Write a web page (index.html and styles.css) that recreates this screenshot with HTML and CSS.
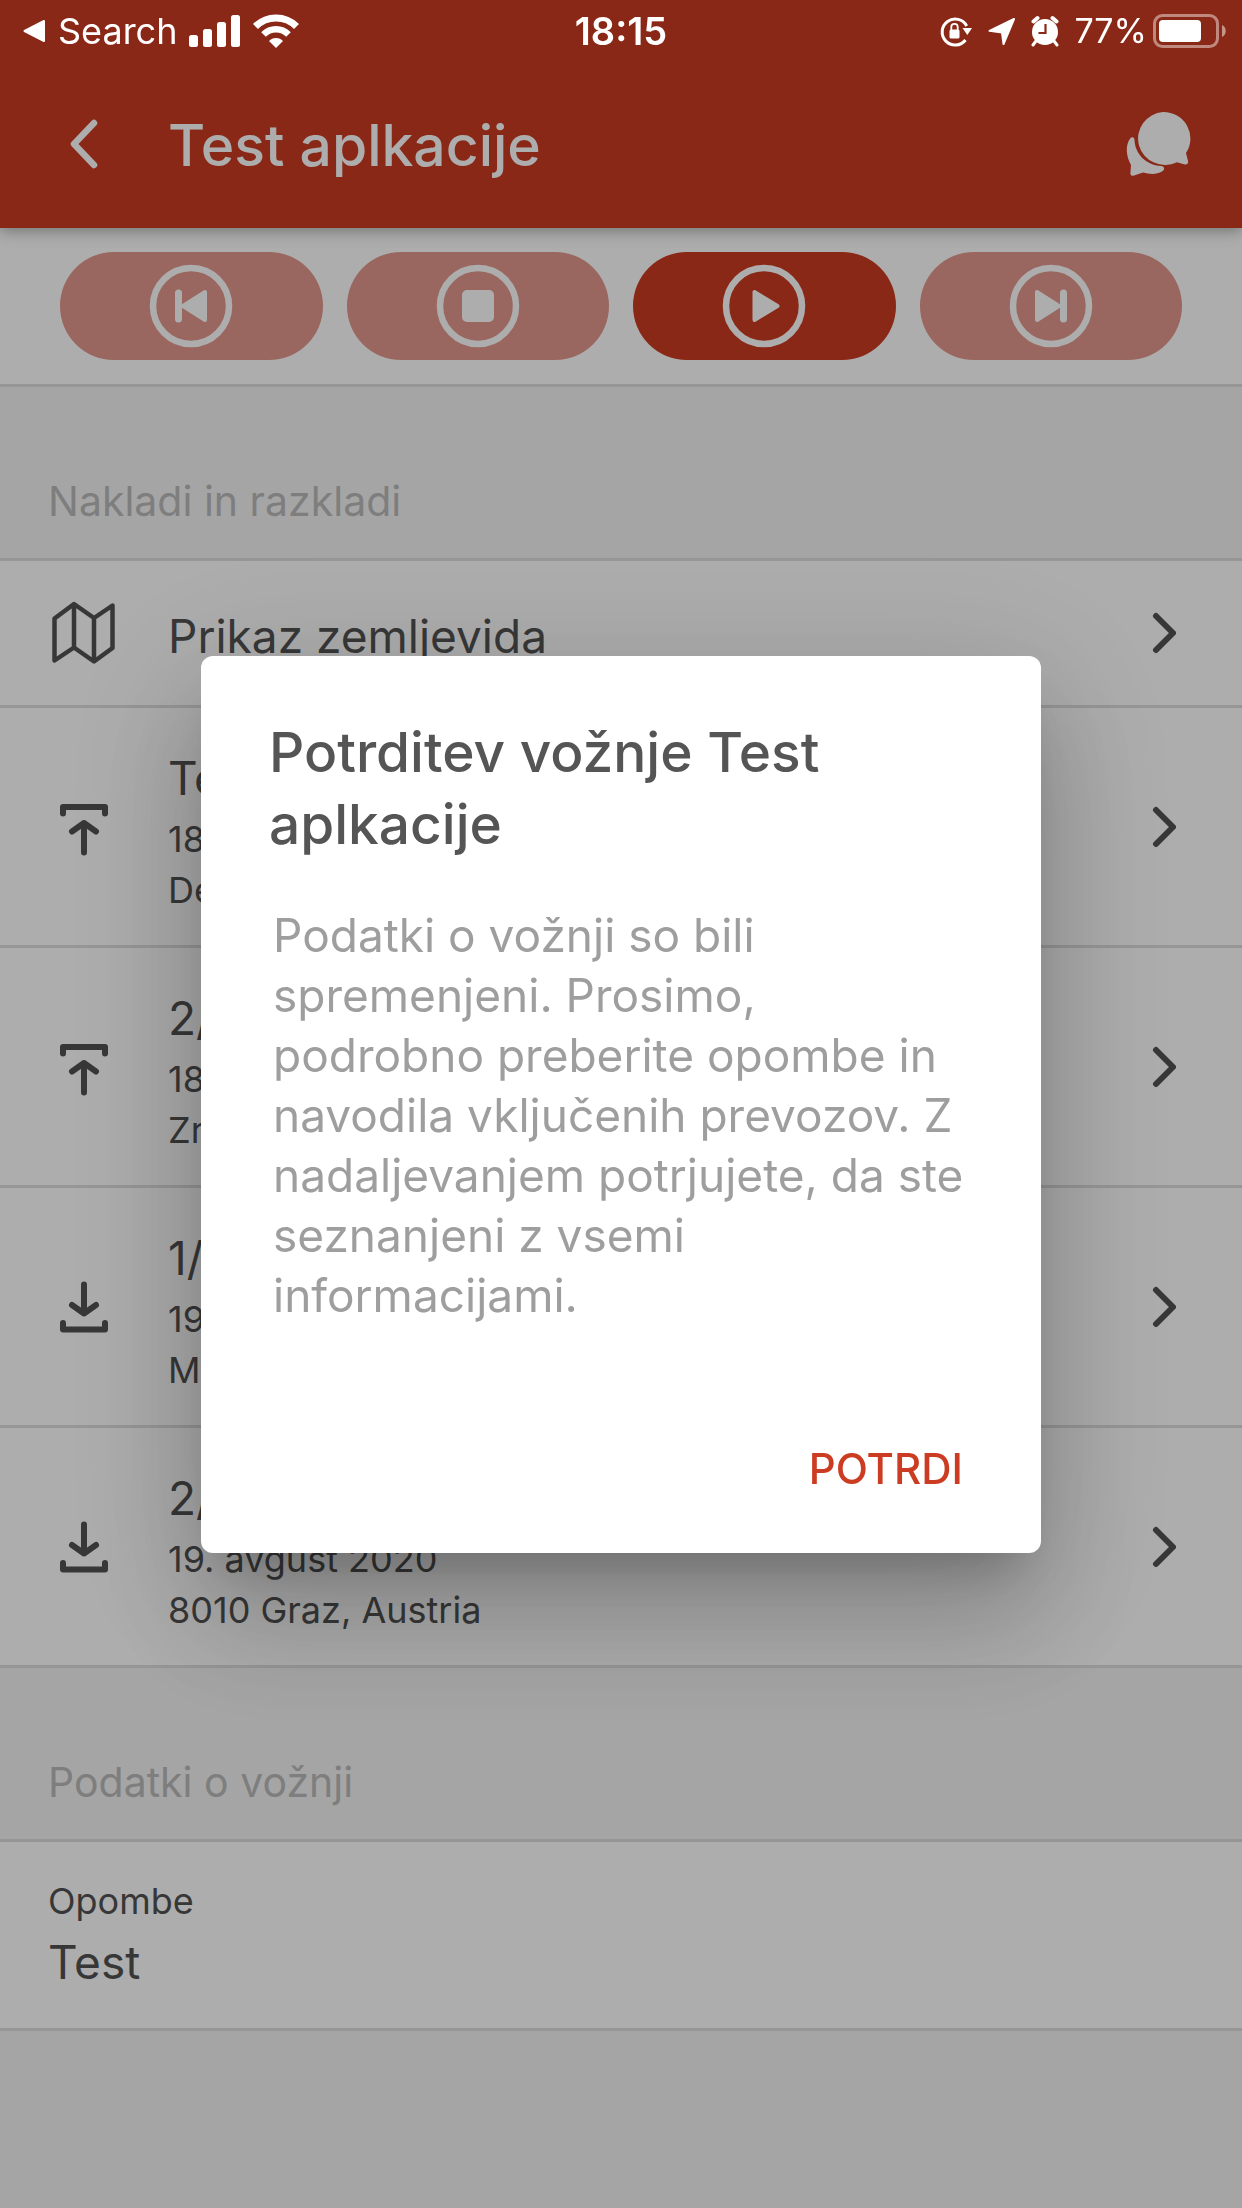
FILE: index.html
```html
<!DOCTYPE html>
<html lang="sl">
<head>
<meta charset="utf-8">
<meta name="viewport" content="width=device-width, initial-scale=1">
<title>Test aplkacije</title>
<link rel="stylesheet" href="styles.css">
</head>
<body>
<svg class="sprite" aria-hidden="true">
  <symbol id="chevron" viewBox="0 0 24 42"><path d="M4 4l17 17L4 38" fill="none" stroke="currentColor" stroke-width="6" stroke-linecap="round" stroke-linejoin="round"/></symbol>
  <symbol id="map" viewBox="0 0 72 72"><path d="M6.500 21.500L26 7l20 14L64.500 8.500V51L46 64.500l-20-14L6.500 63.500zM26 7v43.500M46 21v43.500" fill="none" stroke="currentColor" stroke-width="4.500" stroke-linejoin="round"/></symbol>
  <symbol id="load" viewBox="0 0 72 72"><path d="M15 22.500V16h42v6.500M36 61.500V32M24 40.500L36 32l12 8.500" fill="none" stroke="currentColor" stroke-width="6" stroke-linecap="round" stroke-linejoin="round"/></symbol>
  <symbol id="unload" viewBox="0 0 72 72"><path d="M15 52v6.500h42V52M36 13.500v29M24 34l12 8.500L48 34" fill="none" stroke="currentColor" stroke-width="6" stroke-linecap="round" stroke-linejoin="round"/></symbol>
</svg>

<div class="status">
  <div class="status-left">
    <svg width="24" height="24" viewBox="0 0 24 24"><path d="M2.500 12L22 2v20z" fill="currentColor" stroke="currentColor" stroke-width="2" stroke-linejoin="round"/></svg>
    <span class="status-back">Search</span>
    <svg width="52" height="34" viewBox="0 0 52 34" fill="currentColor"><rect y="21" width="9" height="12" rx="2.500"/><rect x="14" y="15" width="9" height="18" rx="2.500"/><rect x="28" y="8" width="9" height="25" rx="2.500"/><rect x="42" y="1" width="9" height="32" rx="2.500"/></svg>
    <svg width="46" height="34" viewBox="0 0 46 34" fill="none" stroke="currentColor" stroke-width="7"><path d="M2.500 12.500a29 29 0 0 1 41 0"/><path d="M10.500 20.500a17.700 17.700 0 0 1 25 0" stroke-width="6.500"/><path d="M23 24c3 0 5 1 7 3l-7 7-7-7c2-2 4-3 7-3z" fill="currentColor" stroke="none"/></svg>
  </div>
  <span class="status-time">18:15</span>
  <div class="status-right">
    <svg width="34" height="34" viewBox="0 0 34 34"><path d="M26.500 26a13 13 0 1 1 1.200-14" fill="none" stroke="currentColor" stroke-width="3"/><path d="M23.500 14h9.500l-4.700 7z" fill="currentColor"/><rect x="10.500" y="15.500" width="10" height="9" rx="1.500" fill="currentColor"/><path d="M12.300 16v-3a3.200 3.200 0 0 1 6.400 0v3" fill="none" stroke="currentColor" stroke-width="1.800"/></svg>
    <svg width="28" height="34" viewBox="0 0 28 34"><path d="M26 5L1.500 16.800l12.500 1.700L15.500 30z" fill="currentColor" stroke="currentColor" stroke-width="2" stroke-linejoin="round"/></svg>
    <svg width="28" height="34" viewBox="0 0 28 34"><circle cx="14" cy="18" r="13" fill="currentColor"/><path d="M2.500 7.500L6.500 4M25.500 7.500l-4-3.500" stroke="currentColor" stroke-width="4" stroke-linecap="round"/><path d="M5 27l-3 4M23 27l3 4" stroke="currentColor" stroke-width="3" stroke-linecap="round"/><path d="M14.500 10v9H7.500" fill="none" stroke="#8b2917" stroke-width="2.200"/></svg>
    <span class="status-level">77%</span>
    <svg width="74" height="36" viewBox="0 0 74 36"><rect x="1.500" y="2.500" width="63" height="31" rx="8" fill="none" stroke="currentColor" stroke-opacity=".45" stroke-width="3"/><rect x="6" y="7" width="42" height="22" rx="4" fill="currentColor"/><path d="M69 12c5 2 5 10 0 12z" fill="currentColor" fill-opacity=".5"/></svg>
  </div>
</div>

<header class="appbar">
  <button class="icon-button" type="button" aria-label="Nazaj">
    <svg width="30" height="50" viewBox="0 0 30 50"><path d="M25 4L5 25l20 21" fill="none" stroke="currentColor" stroke-width="6.500" stroke-linecap="round" stroke-linejoin="round"/></svg>
  </button>
  <h1 class="appbar-title">Test aplkacije</h1>
  <button class="icon-button" type="button" aria-label="Sporočila">
    <svg width="66" height="66" viewBox="0 0 66 66" fill="currentColor"><path d="M38 1a27 26.500 0 0 1 23 41l2 8c.7 3-1.500 4-4 3.200l-7-2A27 26.500 0 1 1 38 1z"/><path d="M5.500 27c2-1.500 4-.5 4 2C10 43 21 54 36 55c4 .5 4 4 1 5.500-5 3-12 3-19 1l-9 3c-3 1-4-1-3.500-3.500L6 54C1 45 0 34 5.500 27z"/></svg>
  </button>
</header>

<nav class="controls" aria-label="Upravljanje vožnje">
  <button class="control" type="button" disabled aria-label="Prejšnji">
    <svg class="control-icon" viewBox="0 0 84 84"><circle cx="42" cy="42" r="38" fill="none" stroke="currentColor" stroke-width="6.500"/><path d="M29.500 29v26" stroke="currentColor" stroke-width="7" stroke-linecap="round"/><path d="M34 42l22-14v28z" fill="currentColor" stroke="currentColor" stroke-width="4" stroke-linejoin="round"/></svg>
  </button>
  <button class="control" type="button" disabled aria-label="Ustavi">
    <svg class="control-icon" viewBox="0 0 84 84"><circle cx="42" cy="42" r="38" fill="none" stroke="currentColor" stroke-width="6.500"/><rect x="26" y="26" width="32" height="32" rx="5" fill="currentColor"/></svg>
  </button>
  <button class="control" type="button" aria-label="Začni">
    <svg class="control-icon" viewBox="0 0 84 84"><circle cx="42" cy="42" r="38" fill="none" stroke="currentColor" stroke-width="6.500"/><path d="M32.500 28v28l23-14z" fill="currentColor" stroke="currentColor" stroke-width="4" stroke-linejoin="round"/></svg>
  </button>
  <button class="control" type="button" disabled aria-label="Naslednji">
    <svg class="control-icon" viewBox="0 0 84 84"><circle cx="42" cy="42" r="38" fill="none" stroke="currentColor" stroke-width="6.500"/><path d="M54.500 29v26" stroke="currentColor" stroke-width="7" stroke-linecap="round"/><path d="M50 42L28 28v28z" fill="currentColor" stroke="currentColor" stroke-width="4" stroke-linejoin="round"/></svg>
  </button>
</nav>

<main>
  <section>
    <h2 class="section-title">Nakladi in razkladi</h2>
    <a class="row" href="#zemljevid">
      <svg class="row-icon"><use href="#map"/></svg>
      <span class="row-text row-text-single"><span class="row-title">Prikaz zemljevida</span></span>
      <svg class="row-chevron"><use href="#chevron"/></svg>
    </a>
    <a class="row" href="#naklad-1">
      <svg class="row-icon"><use href="#load"/></svg>
      <span class="row-text"><span class="row-title">Te</span><span class="row-line">18</span><span class="row-line">De</span></span>
      <svg class="row-chevron"><use href="#chevron"/></svg>
    </a>
    <a class="row" href="#naklad-2">
      <svg class="row-icon"><use href="#load"/></svg>
      <span class="row-text"><span class="row-title">2/</span><span class="row-line">18</span><span class="row-line">Zr</span></span>
      <svg class="row-chevron"><use href="#chevron"/></svg>
    </a>
    <a class="row" href="#razklad-1">
      <svg class="row-icon"><use href="#unload"/></svg>
      <span class="row-text"><span class="row-title">1/</span><span class="row-line">19</span><span class="row-line">M</span></span>
      <svg class="row-chevron"><use href="#chevron"/></svg>
    </a>
    <a class="row" href="#razklad-2">
      <svg class="row-icon"><use href="#unload"/></svg>
      <span class="row-text"><span class="row-title">2/</span><span class="row-line">19. avgust 2020</span><span class="row-line">8010 Graz, Austria</span></span>
      <svg class="row-chevron"><use href="#chevron"/></svg>
    </a>
  </section>
  <section>
    <h2 class="section-title">Podatki o vožnji</h2>
    <dl class="note">
      <dt class="note-label">Opombe</dt>
      <dd class="note-value">Test</dd>
    </dl>
  </section>
</main>

<div class="backdrop">
  <div class="dialog" role="alertdialog" aria-modal="true" aria-labelledby="dialog-title" aria-describedby="dialog-body">
    <h2 class="dialog-title" id="dialog-title">Potrditev vožnje Test aplkacije</h2>
    <p class="dialog-body" id="dialog-body">Podatki o vožnji so bili spremenjeni. Prosimo, podrobno preberite opombe in navodila vključenih prevozov. Z nadaljevanjem potrjujete, da ste seznanjeni z vsemi informacijami.</p>
    <button class="dialog-action" type="button">POTRDI</button>
  </div>
</div>
</body>
</html>
```
FILE: styles.css
```css
:root {
  --brand: #cc3c22;
  --line: #dedede;
  --ink: #525252;
}

* { box-sizing: border-box; }

body {
  margin: 0;
  min-height: 100vh;
  background: #f4f4f4;
  color: var(--ink);
  font-family: Inter, "Liberation Sans", sans-serif;
}

h1, h2, p, dl, dd { margin: 0; font-weight: 400; }

button {
  border: 0;
  padding: 0;
  background: none;
  color: inherit;
  font: inherit;
}

svg { display: block; flex: none; }
.sprite { position: absolute; width: 0; height: 0; }

/* System status bar stays lit above the dialog backdrop */
.status {
  position: fixed;
  top: 0;
  left: 0;
  right: 0;
  z-index: 3;
  display: grid;
  grid-template-columns: 1fr auto 1fr;
  align-items: center;
  padding: 0 15px;
  color: #fff;
  font-size: 36px;
  line-height: 62px;
}
.status-left, .status-right { display: flex; align-items: center; }
.status-left { gap: 12px; padding-left: 7px; }
.status-time { font-size: 38px; font-weight: 600; }
.status-right { justify-content: flex-end; gap: 15px; }
.status-level { margin-right: -9px; font-size: 34px; }

.appbar {
  position: relative;
  z-index: 1;
  display: flex;
  align-items: center;
  height: 228px;
  padding: 60px 48px 0;
  background: var(--brand);
  color: #fff;
  box-shadow: 0 3px 14px rgba(0, 20, 0, .35);
}
.icon-button {
  display: flex;
  align-items: center;
  justify-content: center;
  width: 72px;
  height: 72px;
}
.appbar-title {
  flex: 1;
  padding: 4px 0 0 48px;
  font-size: 57px;
  font-weight: 500;
  line-height: 72px;
}

.controls {
  display: grid;
  grid-template-columns: repeat(4, 1fr);
  gap: 24px;
  padding: 24px 60px;
  background: #fff;
  border-bottom: 3px solid var(--line);
}
.control {
  display: flex;
  align-items: center;
  justify-content: center;
  height: 108px;
  border-radius: 54px;
  background: var(--brand);
  color: #fff;
}
.control:disabled { background: #e2998c; }
.control-icon { width: 84px; height: 84px; }

.section-title {
  padding: 84px 48px 27px;
  border-bottom: 3px solid var(--line);
  color: #bababa;
  font-size: 41px;
  line-height: 60px;
}

.row {
  display: flex;
  align-items: center;
  padding: 0 66px 0 48px;
  background: #fff;
  border-bottom: 3px solid var(--line);
  color: inherit;
  text-decoration: none;
}
.row-icon { width: 72px; height: 72px; }
.row-text {
  display: flex;
  flex: 1;
  flex-direction: column;
  padding: 40px 0 29px 48px;
}
.row-text-single { padding-top: 45px; padding-bottom: 39px; }
.row-title { font-size: 46px; line-height: 60px; }
.row-title + .row-line { margin-top: 6px; }
.row-line { font-size: 36px; line-height: 51px; }
.row-chevron { width: 24px; height: 42px; }

.note {
  padding: 32px 48px 36px;
  background: #fff;
  border-bottom: 3px solid var(--line);
}
.note-label { font-size: 36px; line-height: 54px; }
.note-value { margin-top: 4px; font-size: 46px; line-height: 60px; }

.backdrop {
  position: fixed;
  inset: 0;
  z-index: 2;
  display: flex;
  align-items: center;
  justify-content: center;
  padding: 48px;
  background: rgba(0, 0, 0, .32);
}
.dialog {
  display: flex;
  flex-direction: column;
  width: 100%;
  max-width: 840px;
  padding: 60px 66px 30px 68px;
  border-radius: 12px;
  background: #fff;
  box-shadow:
    0 33px 45px -21px rgba(0, 0, 0, .2),
    0 72px 114px 9px rgba(0, 0, 0, .14),
    0 27px 138px 24px rgba(0, 0, 0, .12);
}
.dialog-title {
  color: #555;
  font-size: 55px;
  font-weight: 500;
  line-height: 72px;
}
.dialog-body {
  padding: 45px 0 90px 4px;
  color: #9e9e9e;
  font-size: 46px;
  line-height: 60px;
}
.dialog-action {
  align-self: flex-end;
  height: 108px;
  padding: 0 12px;
  color: var(--brand);
  font-size: 42px;
  font-weight: 500;
}
```
